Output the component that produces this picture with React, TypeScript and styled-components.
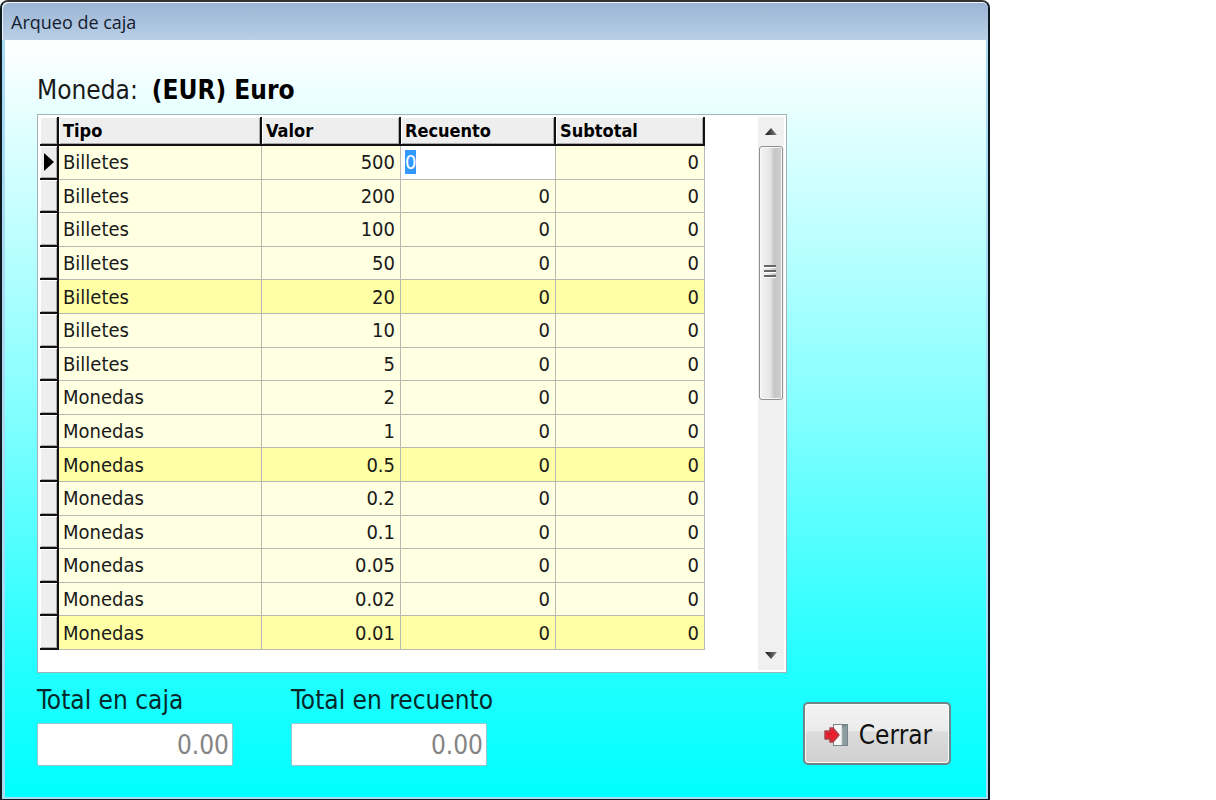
import React, { useEffect, useRef } from "react";
import styled, { createGlobalStyle } from "styled-components";

const GlobalStyle = createGlobalStyle`
  *, *::before, *::after { box-sizing: border-box; }
  body { margin: 0; background: #fff; }
  body, button, input { font-family: "DejaVu Sans Condensed", "DejaVu Sans", sans-serif; }
`;

const Frame = styled.div`
  display: flex;
  flex-direction: column;
  width: 100%;
  max-width: 990px;
  min-height: 100vh;
  background: #a9dcf2;
  border: 2px solid #0c1a20;
  border-top-color: #333;
  border-radius: 8px 8px 0 0;
`;

const TitleBar = styled.header`
  height: 38px;
  padding: 0 9px;
  border-radius: 6px 6px 0 0;
  box-shadow: inset 1px 1px 0 #eef5fb;
  background: linear-gradient(#9bb4d2, #b9cfe8);
`;

const Title = styled.h1`
  margin: 0;
  font: 400 18px/40px "Open Sans", sans-serif;
  color: #14202e;
`;

const Body = styled.main`
  flex: 1;
  display: flex;
  flex-direction: column;
  margin: 0 2px 2px 3px;
  padding: 32px 35px 31px 32px;
  background: linear-gradient(#fff 0%, #80ffff 50%, #22ffff 83%, #00ffff 100%);
`;

const Currency = styled.p`
  display: flex;
  gap: 14px;
  margin: 0 0 6px;
  font-size: 26px;
  line-height: 36px;
  color: #1a1a1a;
`;

const CurrencyName = styled.strong`
  color: #000;
`;

const GridPanel = styled.section`
  display: flex;
  justify-content: space-between;
  margin-right: 164px;
  padding: 2px;
  height: 559px;
  background: #fff;
  border: 1px solid #a3b3b6;
`;

const Grid = styled.table`
  table-layout: fixed;
  width: 665px;
  height: 533px;
  border-collapse: separate;
  border-spacing: 0;
  font-size: 20px;
  line-height: 24px;
  color: #1a1a1a;
`;

const Col = styled.col<{ $w: number }>`
  width: ${(p) => p.$w}px;
`;

const Heading = styled.th`
  height: 29px;
  padding: 0 4px;
  text-align: left;
  font-size: 18px;
  line-height: 24px;
  color: #000;
  background: #eee;
  border-right: 2px solid #111;
  border-bottom: 2px solid #111;
  box-shadow: inset 1px 1px 0 #fff, inset -1px -1px 0 #aaa;
`;

const Row = styled.tr<{ $strong: boolean }>`
  background: ${(p) => (p.$strong ? "#ffffa6" : "#ffffe1")};
`;

const Marker = styled.td`
  padding: 0 0 0 4px;
  line-height: 0;
  background: #eee;
  border-right: 2px solid #111;
  border-bottom: 2px solid #111;
  box-shadow: inset 1px 1px 0 #fff, inset -1px -1px 0 #aaa;
`;

const Cell = styled.td<{ $num?: boolean; $editing?: boolean }>`
  padding: 0 5px 0 4px;
  text-align: ${(p) => (p.$num && !p.$editing ? "right" : "left")};
  ${(p) => p.$editing && "background: #fff;"}
  border-right: 1px solid #b9b9b4;
  border-bottom: 1px solid #b9b9b4;
`;

const CountInput = styled.input`
  display: block;
  width: 100%;
  height: 24px;
  padding: 0;
  border: 0;
  outline: 0;
  background: transparent;
  color: #1a1a1a;
  font-size: 20px;
  line-height: 24px;
  &::selection { background: #3399ff; color: #fff; }
`;

const ScrollBar = styled.div`
  display: flex;
  flex-direction: column;
  width: 26px;
  background: #f0f0f0;
`;

const ScrollButton = styled.button`
  display: flex;
  align-items: center;
  justify-content: center;
  height: 29px;
  padding: 0;
  border: 0;
  background: transparent;
`;

const Track = styled.div`
  flex: 1;
`;

const Thumb = styled.div`
  display: flex;
  align-items: center;
  justify-content: center;
  width: 24px;
  height: 254px;
  margin-left: 1px;
  padding: 0 2px 4px 0;
  border: 1px solid #8f8f8f;
  border-radius: 3px;
  box-shadow: inset 0 0 0 1px #fafafa;
  background: linear-gradient(90deg, #f4f4f4, #e6e6e6 45%, #c6c6c6 65%, #cfcfcf 100%);
`;

const Footer = styled.footer`
  display: flex;
  align-items: flex-end;
  gap: 58px;
  margin-top: 9px;
`;

const Total = styled.label`
  display: flex;
  flex-direction: column;
  gap: 5px;
  width: 196px;
  font-size: 26px;
  line-height: 36px;
  white-space: nowrap;
  color: #06282a;
`;

const TotalInput = styled.input`
  width: 100%;
  height: 43px;
  padding: 0 3px;
  text-align: right;
  font-size: 26px;
  color: #848484;
  background: #fff;
  border: 1px solid #9fc6c8;
  border-radius: 2px;
`;

const CloseButton = styled.button`
  display: flex;
  align-items: center;
  justify-content: center;
  gap: 10px;
  width: 148px;
  height: 63px;
  margin: 0 0 1px auto;
  padding: 2px 0 0 2px;
  font-size: 26px;
  color: #111;
  border: 2px solid #6f8585;
  border-radius: 5px;
  box-shadow: inset 0 0 0 1px #fafafa;
  background: linear-gradient(#f3f3f3, #ebebeb 46%, #dcdcdc 47%, #cfcfcf);
`;

const rows: [string, string][] = [
  ["Billetes", "500"],
  ["Billetes", "200"],
  ["Billetes", "100"],
  ["Billetes", "50"],
  ["Billetes", "20"],
  ["Billetes", "10"],
  ["Billetes", "5"],
  ["Monedas", "2"],
  ["Monedas", "1"],
  ["Monedas", "0.5"],
  ["Monedas", "0.2"],
  ["Monedas", "0.1"],
  ["Monedas", "0.05"],
  ["Monedas", "0.02"],
  ["Monedas", "0.01"],
];

function Arrow({ down = false }: { down?: boolean }) {
  const id = down ? "arrow-down" : "arrow-up";
  return (
    <svg width="12" height="7" viewBox="0 0 12 7" aria-hidden="true">
      <defs>
        <linearGradient id={id}>
          <stop offset="0" stopColor="#111" />
          <stop offset="1" stopColor="#8a8a8a" />
        </linearGradient>
      </defs>
      <path d={down ? "M0 0h12L6 7z" : "M0 7h12L6 0z"} fill={`url(#${id})`} />
    </svg>
  );
}

function DoorIcon() {
  return (
    <svg width="25" height="24" viewBox="0 0 25 24" aria-hidden="true">
      <path d="M9 1h15v22H9z" fill="#75868a" />
      <path d="M10 2h8v20h-8z" fill="#f6f6f4" />
      <path d="M18 5l5-3v20h-5z" fill="#8d9c9f" />
      <path d="M18 4v18" stroke="#b9c4c6" />
      <path d="M1 8h5V5h3l6 7-6 7H6v-3H1z" fill="#e8202f" stroke="#a8434d" strokeWidth="1.5" strokeLinejoin="round" />
      <path d="M3 11h5" stroke="#c01828" />
    </svg>
  );
}

export default function App() {
  const first = useRef<HTMLInputElement>(null);
  useEffect(() => {
    first.current?.focus();
    first.current?.select();
  }, []);

  return (
    <>
      <GlobalStyle />
      <Frame>
        <TitleBar>
          <Title>Arqueo de caja</Title>
        </TitleBar>
        <Body>
          <Currency>
            Moneda: <CurrencyName>(EUR) Euro</CurrencyName>
          </Currency>
          <GridPanel>
            <Grid>
              <colgroup>
                <Col $w={19} />
                <Col $w={203} />
                <Col $w={139} />
                <Col $w={155} />
                <Col $w={149} />
              </colgroup>
              <thead>
                <tr>
                  <Heading aria-label="Fila" />
                  <Heading>Tipo</Heading>
                  <Heading>Valor</Heading>
                  <Heading>Recuento</Heading>
                  <Heading>Subtotal</Heading>
                </tr>
              </thead>
              <tbody>
                {rows.map(([kind, value], i) => (
                  <Row key={value} $strong={i % 5 === 4}>
                    <Marker>
                      {i === 0 && (
                        <svg width="10" height="18" viewBox="0 0 10 18" aria-hidden="true">
                          <path d="M0 0v18l10-9z" fill="#000" />
                        </svg>
                      )}
                    </Marker>
                    <Cell>{kind}</Cell>
                    <Cell $num>{value}</Cell>
                    <Cell $num $editing={i === 0}>
                      {i === 0 ? (
                        <CountInput ref={first} aria-label="Recuento" defaultValue="0" />
                      ) : (
                        "0"
                      )}
                    </Cell>
                    <Cell $num>0</Cell>
                  </Row>
                ))}
              </tbody>
            </Grid>
            <ScrollBar>
              <ScrollButton aria-label="Subir">
                <Arrow />
              </ScrollButton>
              <Track>
                <Thumb>
                  <svg width="12" height="14" viewBox="0 0 12 14" aria-hidden="true">
                    <path d="M0 2h12M0 7h12M0 12h12" stroke="#666" strokeWidth="2" />
                    <path d="M0 3.5h12M0 8.5h12M0 13.5h12" stroke="#fff" strokeWidth="1" />
                  </svg>
                </Thumb>
              </Track>
              <ScrollButton aria-label="Bajar">
                <Arrow down />
              </ScrollButton>
            </ScrollBar>
          </GridPanel>
          <Footer>
            <Total>
              Total en caja
              <TotalInput readOnly value="0.00" />
            </Total>
            <Total>
              Total en recuento
              <TotalInput readOnly value="0.00" />
            </Total>
            <CloseButton type="button">
              <DoorIcon />
              Cerrar
            </CloseButton>
          </Footer>
        </Body>
      </Frame>
    </>
  );
}
